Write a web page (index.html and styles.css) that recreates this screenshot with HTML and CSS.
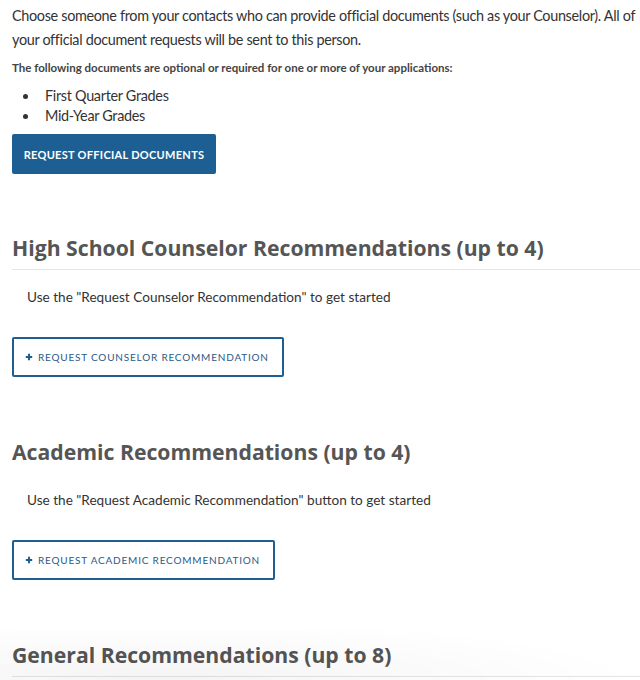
FILE: index.html
```html
<!DOCTYPE html>
<html>
<head>
<meta charset="utf-8">
<link rel="stylesheet" href="styles.css">
</head>
<body>
<main class="page">
  <section class="docs">
    <p class="intro">Choose someone from your contacts who can provide official documents (such as your Counselor). All of your official document requests will be sent to this person.</p>
    <p class="note">The following documents are optional or required for one or more of your applications:</p>
    <ul class="doc-list">
      <li>First Quarter Grades</li>
      <li>Mid-Year Grades</li>
    </ul>
    <button class="btn-solid">REQUEST OFFICIAL DOCUMENTS</button>
  </section>

  <section class="rec">
    <h2 class="rec-title ruled">High School Counselor Recommendations (up to 4)</h2>
    <p class="rec-hint">Use the "Request Counselor Recommendation" to get started</p>
    <button class="btn-outline"><svg class="plus" viewBox="0 0 10 10"><path d="M5 1v8M1 5h8"/></svg>REQUEST COUNSELOR RECOMMENDATION</button>
  </section>

  <section class="rec">
    <h2 class="rec-title">Academic Recommendations (up to 4)</h2>
    <p class="rec-hint">Use the "Request Academic Recommendation" button to get started</p>
    <button class="btn-outline"><svg class="plus" viewBox="0 0 10 10"><path d="M5 1v8M1 5h8"/></svg>REQUEST ACADEMIC RECOMMENDATION</button>
  </section>

  <section class="rec">
    <h2 class="rec-title ruled">General Recommendations (up to 8)</h2>
  </section>
</main>
<div class="bottom-fade"></div>
</body>
</html>
```

FILE: styles.css
```css
html, body {
  margin: 0;
  padding: 0;
  background: #fff;
}
body {
  font-family: Lato, "Noto Sans", sans-serif;
  color: #333;
  overflow: hidden;
  height: 680px;
}
.page {
  padding: 4px 0 0 12px;
}
.intro {
  margin: 0;
  font-size: 14.4px;
  line-height: 24px;
  letter-spacing: -0.32px;
}
.note {
  margin: 7px 0 0;
  font-size: 11.5px;
  font-weight: 700;
  color: #444;
  line-height: 18px;
}
.doc-list {
  margin: 9px 0 0;
  padding: 0;
  list-style: none;
  font-size: 14.4px;
  line-height: 20px;
  letter-spacing: -0.3px;
}
.doc-list li {
  display: flex;
  align-items: center;
  padding-left: 11px;
}
.doc-list li::before {
  content: "";
  width: 5px;
  height: 5px;
  border-radius: 50%;
  background: #333;
  margin-right: 17px;
}
.btn-solid {
  margin-top: 8px;
  display: block;
  width: 204px;
  height: 40px;
  border: 0;
  border-radius: 2px;
  background: #1d5f93;
  color: #fff;
  font-family: Lato, sans-serif;
  font-size: 11px;
  font-weight: 700;
  letter-spacing: 0.3px;
  padding: 0;
}
.rec {
  margin-top: 60px;
}
.rec + .rec {
  margin-top: 61px;
}
.rec-title {
  margin: 0;
  font-family: "Open Sans", sans-serif;
  font-weight: 700;
  font-size: 21.2px;
  color: #555;
  line-height: 28px;
  padding-bottom: 7px;
}
.rec-title.ruled {
  border-bottom: 1px solid #e6e6e6;
}
.rec-hint {
  margin: 17px 0 0 15px;
  font-size: 13.6px;
  line-height: 20px;
  color: #333;
}
.btn-outline {
  margin-top: 30px;
  display: flex;
  align-items: center;
  gap: 5px;
  height: 40px;
  padding: 0 13px 0 11px;
  border: 2px solid #1d5f93;
  border-radius: 2px;
  background: #fff;
  color: #2a5a85;
  font-family: Lato, sans-serif;
  font-size: 10px;
  letter-spacing: 0.8px;
}
.plus {
  width: 8px;
  height: 8px;
  stroke: #1d5f93;
  stroke-width: 2.6;
  fill: none;
}
.bottom-fade {
  position: fixed;
  left: 0;
  right: 0;
  bottom: 0;
  height: 50px;
  pointer-events: none;
  background: radial-gradient(ellipse 480px 60px at 25% 100%, rgba(0,0,0,0.045), rgba(0,0,0,0));
}
```
